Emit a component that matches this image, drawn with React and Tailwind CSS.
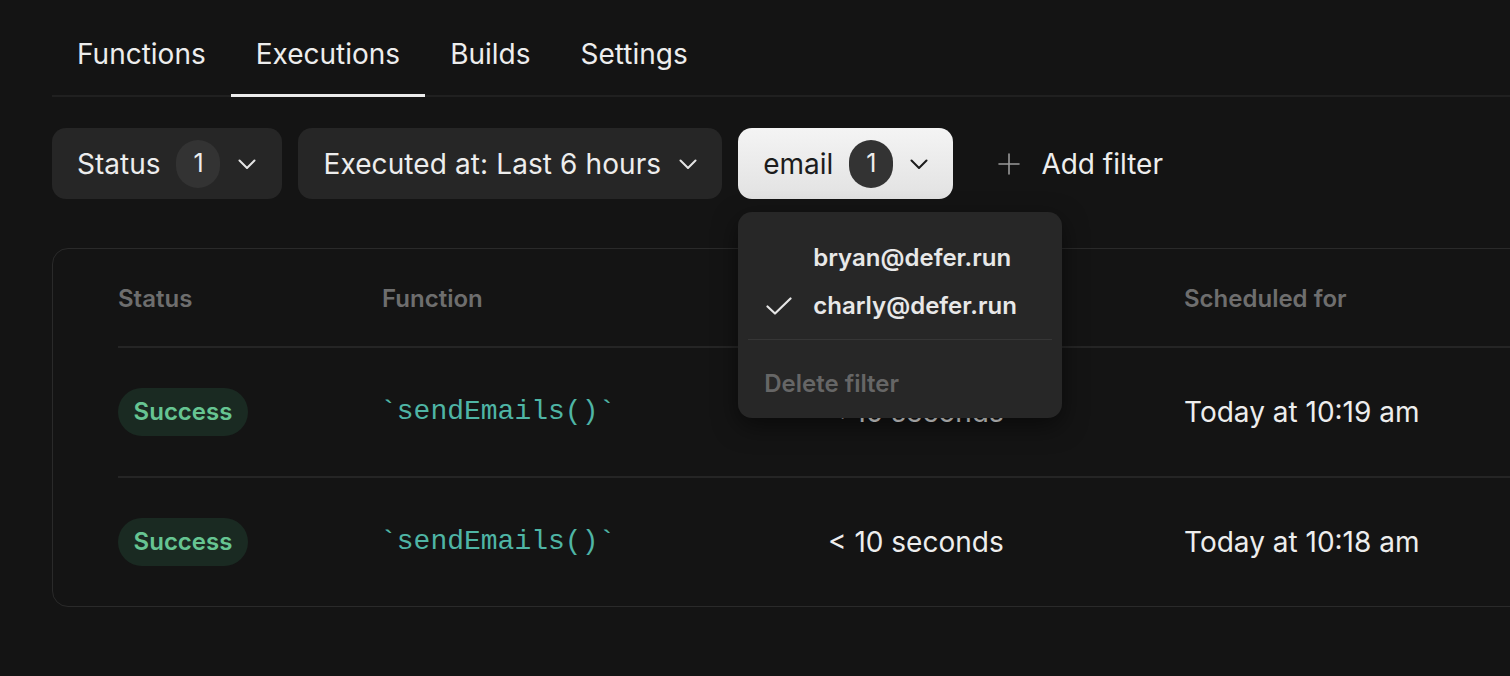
import React from 'react';

const font = { fontFamily: 'Inter, "Noto Sans", sans-serif' };

function Chevron({ className }) {
  return (
    <svg width="18" height="10" viewBox="0 0 18 10" fill="none" className={className}>
      <path d="M1.5 1.5l7.5 7.5 7.5-7.5" stroke="currentColor" strokeWidth="2" strokeLinecap="round" strokeLinejoin="round" />
    </svg>
  );
}

function Check() {
  return (
    <svg width="26" height="18" viewBox="0 0 26 18" fill="none">
      <path d="M1.5 9.5l7.5 7L24.5 1.5" stroke="#e5e5e5" strokeWidth="2.2" strokeLinecap="round" strokeLinejoin="round" />
    </svg>
  );
}

function Plus() {
  return (
    <svg width="22" height="22" viewBox="0 0 22 22" fill="none">
      <path d="M11 1v20M1 11h20" stroke="#9a9a9a" strokeWidth="1.6" strokeLinecap="round" />
    </svg>
  );
}

const tabs = ['Functions', 'Executions', 'Builds', 'Settings'];

const rows = [
  { fn: '`sendEmails()`', duration: '< 10 seconds', at: 'Today at 10:19 am' },
  { fn: '`sendEmails()`', duration: '< 10 seconds', at: 'Today at 10:18 am' },
];

export default function App() {
  return (
    <div className="w-full h-[676px] bg-[#141414] overflow-hidden text-[#ededed]" style={font}>
      <div className="pl-[52px]">
        {/* Onglets */}
        <div className="flex border-b-2 border-[#202020]">
          {tabs.map((t) => (
            <div
              key={t}
              className={
                'px-[25px] pt-[38px] pb-[24px] text-[28px] leading-[32px] -mb-[2px] border-b-[3px] ' +
                (t === 'Executions' ? 'border-[#ececec]' : 'border-transparent')
              }
            >
              {t}
            </div>
          ))}
        </div>

        {/* Filtres */}
        <div className="mt-[31px] flex items-center gap-4">
          <div className="h-[71px] flex items-center rounded-[14px] bg-[#262626] pl-[25px] pr-[26px] text-[28px]">
            <span>Status</span>
            <span className="ml-4 w-[44px] h-[48px] rounded-full bg-[#333333] flex items-center justify-center text-[25px]">1</span>
            <Chevron className="ml-[18px] text-[#e5e5e5]" />
          </div>
          <div className="h-[71px] flex items-center rounded-[14px] bg-[#262626] pl-[25px] pr-[25px] text-[28px]">
            <span className="tracking-[0.1px]">Executed at: Last 6 hours</span>
            <Chevron className="ml-[18px] text-[#e5e5e5]" />
          </div>
          <div className="relative">
            <div className="h-[71px] flex items-center rounded-[14px] bg-gradient-to-b from-[#f4f4f4] to-[#e2e2e2] pl-[25px] pr-[25px] text-[28px] text-[#1c1c1c]">
              <span>email</span>
              <span className="ml-4 w-[44px] h-[48px] rounded-full bg-[#333333] text-[#ededed] flex items-center justify-center text-[25px]">1</span>
              <Chevron className="ml-[17px] text-[#1c1c1c]" />
            </div>

            {/* Menu déroulant */}
            <div className="absolute left-0 top-[84px] w-[324px] rounded-[14px] bg-[#272727] pt-[22px] pb-[10px] z-10 shadow-[0_8px_24px_rgba(0,0,0,0.5)]">
              <div className="h-[48px] flex items-center px-[26px] text-[24px] font-semibold text-[#e8e8e8]">
                <span className="w-[49px]"></span>
                <span>bryan@defer.run</span>
              </div>
              <div className="h-[48px] flex items-center px-[26px] text-[24px] font-semibold text-[#e8e8e8]">
                <span className="w-[49px] flex items-center pl-[2px]"><Check /></span>
                <span>charly@defer.run</span>
              </div>
              <div className="mt-[9px] mx-[10px] h-px bg-[#363636]"></div>
              <div className="mt-[20px] h-[48px] flex items-center px-[26px] text-[24px] font-semibold text-[#666666]">
                Delete filter
              </div>
            </div>
          </div>
          <div className="ml-[29px] flex items-center gap-[21px] text-[28px]">
            <Plus />
            <span>Add filter</span>
          </div>
        </div>

        {/* Tableau */}
        <div className="mt-[49px] w-[1600px] rounded-[16px] border border-[#2a2a2a] pl-[65px]">
          <div className="grid grid-cols-[264px_446px_356px_1fr] h-[99px] pt-[2px] items-center border-b-2 border-[#252525] text-[24px] font-semibold text-[#6e6e6e]">
            <span>Status</span>
            <span>Function</span>
            <span>Duration</span>
            <span>Scheduled for</span>
          </div>
          {rows.map((r, i) => (
            <div
              key={i}
              className={
                'grid grid-cols-[264px_446px_356px_1fr] items-center text-[28px] ' +
                (i === 0 ? 'h-[130px] border-b-2 border-[#252525]' : 'h-[128px]')
              }
            >
              <span>
                <span className="inline-flex items-center justify-center w-[130px] h-[48px] rounded-full bg-[#1a2a22] text-[#66c592] text-[24px] font-semibold">
                  Success
                </span>
              </span>
              <span className="text-[#4fb5a5] text-[28px] -ml-[2px]" style={{ fontFamily: '"Liberation Mono", monospace' }}>
                {r.fn}
              </span>
              <span>{r.duration}</span>
              <span>{r.at}</span>
            </div>
          ))}
        </div>
      </div>
    </div>
  );
}
